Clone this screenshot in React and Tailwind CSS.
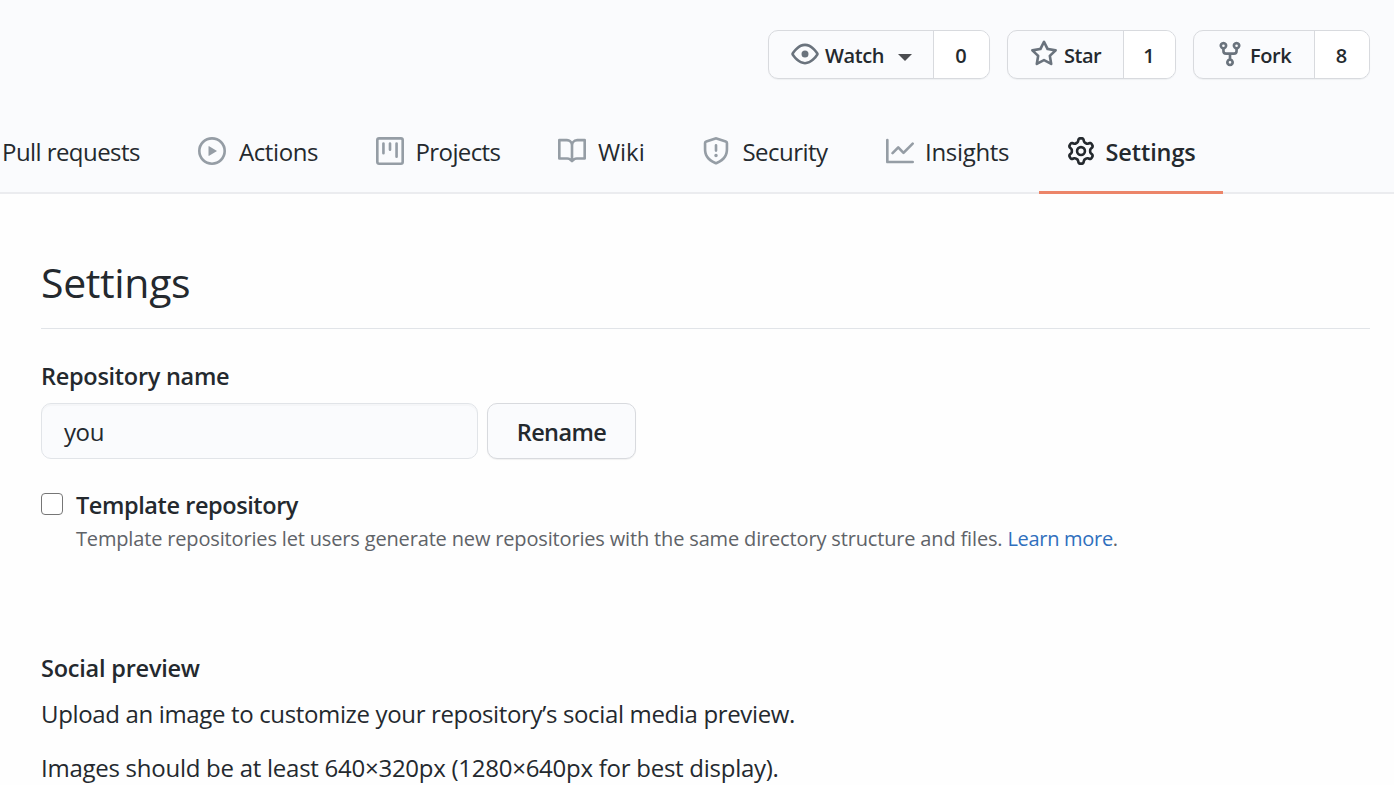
const paths = {
  eye: "M1.679 7.932c.412-.621 1.242-1.75 2.366-2.717C5.175 4.242 6.527 3.5 8 3.5c1.473 0 2.824.742 3.955 1.715 1.124.967 1.954 2.096 2.366 2.717a.119.119 0 010 .136c-.412.621-1.242 1.75-2.366 2.717C10.825 11.758 9.473 12.5 8 12.5c-1.473 0-2.824-.742-3.955-1.715C2.92 9.818 2.09 8.69 1.679 8.068a.119.119 0 010-.136zM8 2c-1.981 0-3.67.992-4.933 2.078C1.797 5.169.88 6.423.43 7.1a1.619 1.619 0 000 1.798c.45.678 1.367 1.932 2.637 3.024C4.329 13.008 6.019 14 8 14c1.981 0 3.67-.992 4.933-2.078 1.27-1.091 2.187-2.345 2.637-3.023a1.619 1.619 0 000-1.798c-.45-.678-1.367-1.932-2.637-3.023C11.671 2.992 9.981 2 8 2zm0 8a2 2 0 100-4 2 2 0 000 4z",
  star: "M8 .25a.75.75 0 01.673.418l1.882 3.815 4.21.612a.75.75 0 01.416 1.279l-3.046 2.97.719 4.192a.75.75 0 01-1.088.791L8 12.347l-3.766 1.98a.75.75 0 01-1.088-.79l.72-4.194L.818 6.374a.75.75 0 01.416-1.28l4.21-.611L7.327.668A.75.75 0 018 .25zm0 2.445L6.615 5.5a.75.75 0 01-.564.41l-3.097.45 2.24 2.184a.75.75 0 01.216.664l-.528 3.084 2.769-1.456a.75.75 0 01.698 0l2.77 1.456-.53-3.084a.75.75 0 01.216-.664l2.24-2.183-3.096-.45a.75.75 0 01-.564-.41L8 2.694v.001z",
  fork: "M5 3.25a.75.75 0 11-1.5 0 .75.75 0 011.5 0zm0 2.122a2.25 2.25 0 10-1.5 0v.878A2.25 2.25 0 005.75 8.5h1.5v2.128a2.251 2.251 0 101.5 0V8.5h1.5a2.25 2.25 0 002.25-2.25v-.878a2.25 2.25 0 10-1.5 0v.878a.75.75 0 01-.75.75h-4.5A.75.75 0 015 6.25v-.878zm3.75 7.378a.75.75 0 11-1.5 0 .75.75 0 011.5 0zm3-8.75a.75.75 0 100-1.5.75.75 0 000 1.5z",
  play: "M1.5 8a6.5 6.5 0 1113 0 6.5 6.5 0 01-13 0zM8 0a8 8 0 100 16A8 8 0 008 0zM6.379 5.227A.25.25 0 006 5.442v5.117a.25.25 0 00.379.214l4.264-2.559a.25.25 0 000-.428L6.379 5.227z",
  project: "M1.75 0A1.75 1.75 0 000 1.75v12.5C0 15.216.784 16 1.75 16h12.5A1.75 1.75 0 0016 14.25V1.75A1.75 1.75 0 0014.25 0H1.75zM1.5 1.75a.25.25 0 01.25-.25h12.5a.25.25 0 01.25.25v12.5a.25.25 0 01-.25.25H1.75a.25.25 0 01-.25-.25V1.75zM11.75 3a.75.75 0 00-.75.75v7.5a.75.75 0 001.5 0v-7.5a.75.75 0 00-.75-.75zm-8.25.75a.75.75 0 011.5 0v5.5a.75.75 0 01-1.5 0v-5.5zM8 3a.75.75 0 00-.75.75v3.5a.75.75 0 001.5 0v-3.5A.75.75 0 008 3z",
  book: "M0 1.75A.75.75 0 01.75 1h4.253c1.227 0 2.317.59 3 1.501A3.744 3.744 0 0111.006 1h4.245a.75.75 0 01.75.75v10.5a.75.75 0 01-.75.75h-4.507a2.25 2.25 0 00-1.591.659l-.622.621a.75.75 0 01-1.06 0l-.622-.621A2.25 2.25 0 005.258 13H.75a.75.75 0 01-.75-.75V1.75zm8.755 3a2.25 2.25 0 012.25-2.25H14.5v9h-3.757c-.71 0-1.4.201-1.992.572l.004-7.322zm-1.504 7.324l.004-5.073-.002-2.253A2.25 2.25 0 005.003 2.5H1.5v9h3.757a3.75 3.75 0 011.994.574z",
  shield: "M7.467.133a1.75 1.75 0 011.066 0l5.25 1.68A1.75 1.75 0 0115 3.48V7c0 1.566-.32 3.182-1.303 4.682-.983 1.498-2.585 2.813-5.032 3.855a1.7 1.7 0 01-1.33 0c-2.447-1.042-4.049-2.357-5.032-3.855C1.32 10.182 1 8.566 1 7V3.48a1.75 1.75 0 011.217-1.667l5.25-1.68zm.61 1.429a.25.25 0 00-.153 0l-5.25 1.68a.25.25 0 00-.174.238V7c0 1.358.275 2.666 1.057 3.86.784 1.194 2.121 2.34 4.366 3.297a.2.2 0 00.154 0c2.245-.956 3.582-2.104 4.366-3.298C13.225 9.666 13.5 8.36 13.5 7V3.48a.25.25 0 00-.174-.237l-5.25-1.68zM9 10.5a1 1 0 11-2 0 1 1 0 012 0zm-.25-5.75a.75.75 0 10-1.5 0v3a.75.75 0 001.5 0v-3z",
  graph: "M1.5 1.75a.75.75 0 00-1.5 0v12.5c0 .414.336.75.75.75h14.5a.75.75 0 000-1.5H1.5V1.75zm14.28 2.53a.75.75 0 00-1.06-1.06L10 7.94 7.53 5.47a.75.75 0 00-1.06 0L3.22 8.72a.75.75 0 001.06 1.06L7 7.06l2.47 2.47a.75.75 0 001.06 0l5.25-5.25z",
  gear: "M7.429 1.525a6.593 6.593 0 011.142 0c.036.003.108.036.137.146l.289 1.105c.147.56.55.967.997 1.189.174.086.341.183.501.29.417.278.97.423 1.53.27l1.102-.303c.11-.03.175.016.195.046.219.31.41.641.573.989.014.031.022.11-.059.19l-.815.806c-.411.406-.562.957-.53 1.456a4.588 4.588 0 010 .582c-.032.499.119 1.05.53 1.456l.815.806c.08.08.073.159.059.19a6.494 6.494 0 01-.573.99c-.02.029-.086.074-.195.045l-1.103-.303c-.559-.153-1.112-.008-1.529.27-.16.107-.327.204-.5.29-.449.222-.851.628-.998 1.189l-.289 1.105c-.029.11-.101.143-.137.146a6.613 6.613 0 01-1.142 0c-.036-.003-.108-.037-.137-.146l-.289-1.105c-.147-.56-.55-.967-.997-1.189a4.502 4.502 0 01-.501-.29c-.417-.278-.97-.423-1.53-.27l-1.102.303c-.11.03-.175-.016-.195-.046a6.492 6.492 0 01-.573-.989c-.014-.031-.022-.11.059-.19l.815-.806c.411-.406.562-.957.53-1.456a4.587 4.587 0 010-.582c.032-.499-.119-1.05-.53-1.456l-.815-.806c-.08-.08-.073-.159-.059-.19a6.44 6.44 0 01.573-.99c.02-.029.086-.075.195-.045l1.103.303c.559.153 1.112.008 1.529-.27.16-.107.327-.204.5-.29.449-.222.851-.628.998-1.189l.289-1.105c.029-.11.101-.143.137-.146zM8 0c-.236 0-.47.01-.701.03-.743.065-1.29.615-1.458 1.261l-.29 1.106c-.017.066-.078.158-.211.224a5.994 5.994 0 00-.668.386c-.123.082-.233.09-.3.071L3.27 2.776c-.644-.177-1.392.02-1.82.63a7.977 7.977 0 00-.704 1.217c-.315.675-.111 1.422.363 1.891l.815.806c.05.048.098.147.088.294a6.084 6.084 0 000 .772c.01.147-.038.246-.088.294l-.815.806c-.474.469-.678 1.216-.363 1.891.2.428.436.835.704 1.218.428.609 1.176.806 1.82.63l1.103-.303c.066-.019.176-.011.299.071.213.143.436.272.668.386.133.066.194.158.212.224l.289 1.106c.169.646.715 1.196 1.458 1.26a8.094 8.094 0 001.402 0c.743-.064 1.29-.614 1.458-1.26l.29-1.106c.017-.066.078-.158.211-.224a5.98 5.98 0 00.668-.386c.123-.082.233-.09.3-.071l1.102.302c.644.177 1.392-.02 1.82-.63.268-.382.505-.789.704-1.217.315-.675.111-1.422-.364-1.891l-.814-.806c-.05-.048-.098-.147-.088-.294a6.1 6.1 0 000-.772c-.01-.147.039-.246.088-.294l.814-.806c.475-.469.679-1.216.364-1.891a7.992 7.992 0 00-.704-1.218c-.428-.609-1.176-.806-1.82-.63l-1.103.303c-.066.019-.176.011-.299-.071a5.991 5.991 0 00-.668-.386c-.133-.066-.194-.158-.212-.224L10.16 1.29C9.99.645 9.444.095 8.701.031A8.094 8.094 0 008 0zm1.5 8a1.5 1.5 0 11-3 0 1.5 1.5 0 013 0zM11 8a3 3 0 11-6 0 3 3 0 016 0z",
};

function Icon({ name, className }) {
  return (
    <svg viewBox="0 0 16 16" fillRule="evenodd" fill="currentColor" aria-hidden="true" className={`size-7 shrink-0 ${className}`}>
      <path d={paths[name]} />
    </svg>
  );
}

function CountButton({ icon, label, count, className, labelClass, caret }) {
  return (
    <div className={`flex h-[49px] overflow-hidden rounded-[10px] border border-[#d8dade] text-xl font-semibold shadow-[0_1px_1px_rgba(27,31,35,0.05)] ${className}`}>
      <button className="flex flex-1 items-center pl-[22px]">
        <Icon name={icon} className="-mt-[2px] text-[#6a737d]" />
        <span className={`pt-[2px] leading-none ${labelClass}`}>{label}</span>
        {caret && <span className="mt-[5px] ml-[14px] border-x-[7px] border-t-[7px] border-x-transparent border-t-[#4b4d50]" />}
      </button>
      <a className="flex w-(--count-w) items-center justify-center border-l border-[#d8dade] bg-white pt-[2px] pr-px leading-none">{count}</a>
    </div>
  );
}

const tabs = [
  { icon: "play", label: "Actions", item: "w-[178px]", text: "ml-[13px] tracking-[-0.4px]" },
  { icon: "project", label: "Projects", item: "w-[182px]", text: "ml-[11.5px] tracking-[-0.6px]" },
  { icon: "book", label: "Wiki", item: "w-[144px]", text: "ml-[12px] tracking-[-0.05px]" },
  { icon: "shield", label: "Security", item: "w-[184px]", text: "ml-[12.5px] tracking-[-0.55px]" },
  { icon: "graph", label: "Insights", item: "w-[153px]", text: "ml-[11px] tracking-[-0.3px]" },
];

export default function App() {
  return (
    <div className="h-[785px] w-[1394px] overflow-hidden bg-[#fefefe] font-['Open_Sans',sans-serif] text-2xl whitespace-nowrap text-[#24292e]">
      <header className="flex h-[194px] flex-col border-b-2 border-[#ebecef] bg-[#fafbfd]">
        <div className="flex h-[79px] justify-end gap-[17px] pt-[30px] pr-6">
          <CountButton icon="eye" label="Watch" count="0" caret className="w-[222px] [--count-w:56px]" labelClass="ml-[6px] tracking-[-0.4px]" />
          <CountButton icon="star" label="Star" count="1" className="w-[169px] [--count-w:52px]" labelClass="ml-[6px] tracking-[-0.5px]" />
          <CountButton icon="fork" label="Fork" count="8" className="w-[177px] [--count-w:55px]" labelClass="ml-[6px] tracking-[-0.4px]" />
        </div>
        <nav className="mt-[31px] flex h-[84px] shrink-0 pl-[2px]">
          <a className="flex h-[83px] w-[196px] items-center tracking-[-0.56px]">Pull requests</a>
          {tabs.map((t) => (
            <a key={t.label} className={`flex h-[83px] shrink-0 items-center ${t.item}`}>
              <Icon name={t.icon} className="-mt-[2px] text-[#959da5]" />
              <span className={t.text}>{t.label}</span>
            </a>
          ))}
          <a className="flex h-[84px] w-[184px] items-center border-b-3 border-[#ec8569] pt-[2px] pl-7 text-[23.5px] font-semibold">
            <Icon name="gear" className="-mt-[2px]" />
            <span className="ml-[10.5px] pt-[2px] tracking-[-0.1px]">Settings</span>
          </a>
        </nav>
      </header>

      <main className="flex flex-col pr-6 pl-[41px]">
        <h1 className="mt-[60px] flex h-[75px] items-center border-b border-[#e1e4e8] pb-[18px] text-[41px] leading-none tracking-[-0.35px]">Settings</h1>

        <label className="mt-[31px] text-[23.5px] leading-8 font-semibold tracking-[-0.28px]">Repository name</label>
        <div className="mt-[11px] flex gap-[9px]">
          <div className="flex h-14 w-[437px] items-center rounded-[10px] border border-[#e1e4e8] bg-[#fafbfd] px-[22px] pt-[2px] tracking-[-0.4px] shadow-[inset_0_2px_0_rgba(225,228,232,0.2)]">you</div>
          <button className="h-14 w-[149px] rounded-[10px] border border-[#d8dade] bg-[#fafbfd] pt-[3px] text-[23.5px] font-semibold tracking-[-0.6px] shadow-[0_1px_1px_rgba(27,31,35,0.06)]">Rename</button>
        </div>

        <div className="mt-[30px] flex gap-[13px]">
          <span className="mt-1 size-[22px] rounded-[4px] border border-[#767676] bg-white" />
          <div>
            <div className="text-[23.5px] leading-8 font-semibold tracking-[-0.42px]">Template repository</div>
            <p className="pt-px text-xl leading-[34px] tracking-[-0.16px] text-[#5f6368]">
              Template repositories let users generate new repositories with the same directory structure and files.{" "}
              <a className="tracking-[-0.3px] text-[#2f6fbd]">Learn more</a>.
            </p>
          </div>
        </div>

        <h2 className="mt-24 text-[23.5px] leading-8 font-semibold tracking-[-0.22px]">Social preview</h2>
        <p className="mt-[14px] leading-8 tracking-[-0.35px]">Upload an image to customize your repository’s social media preview.</p>
        <p className="mt-[22px] leading-8 tracking-[-0.26px]">Images should be at least 640×320px (1280×640px for best display).</p>
      </main>
    </div>
  );
}
